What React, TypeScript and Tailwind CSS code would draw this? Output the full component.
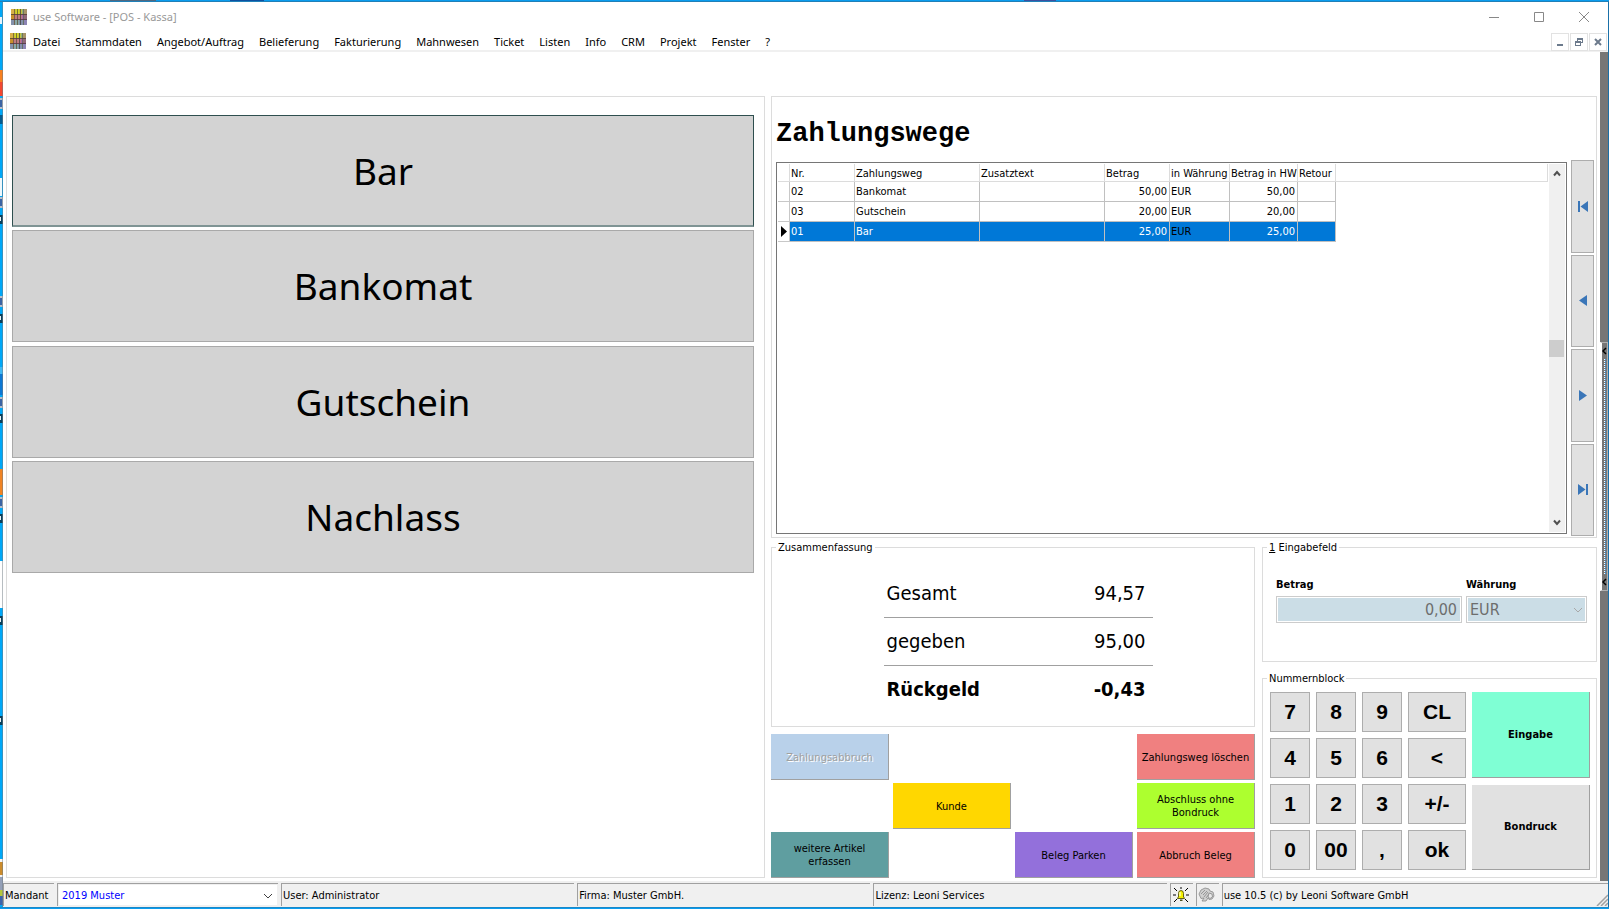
import React, { useState } from 'react';

const UI_FONT = "font-['DejaVu_Sans_Condensed','Noto_Sans',sans-serif]";
const MENU_FONT = "font-['Noto_Sans','Open_Sans',sans-serif]";

const menuItems = [
  'Datei',
  'Stammdaten',
  'Angebot/Auftrag',
  'Belieferung',
  'Fakturierung',
  'Mahnwesen',
  'Ticket',
  'Listen',
  'Info',
  'CRM',
  'Projekt',
  'Fenster',
  '?',
];

const paymentTypes = ['Bar', 'Bankomat', 'Gutschein', 'Nachlass'];

const columns = [
  { label: 'Nr.', width: 'w-[65px]' },
  { label: 'Zahlungsweg', width: 'w-[125px]' },
  { label: 'Zusatztext', width: 'w-[125px]' },
  { label: 'Betrag', width: 'w-[65px]' },
  { label: 'in Währung', width: 'w-[60px]' },
  { label: 'Betrag in HW', width: 'w-[68px]' },
  { label: 'Retour', width: 'w-[38px]' },
];

const payments = [
  { nr: '02', name: 'Bankomat', amount: '50,00', currency: 'EUR' },
  { nr: '03', name: 'Gutschein', amount: '20,00', currency: 'EUR' },
  { nr: '01', name: 'Bar', amount: '25,00', currency: 'EUR' },
];

const keys = [
  '7', '8', '9', 'CL',
  '4', '5', '6', '<',
  '1', '2', '3', '+/-',
  '0', '00', ',', 'ok',
];

const AppIcon = () => (
  <svg width="16" height="16" viewBox="0 0 16 16" className="shrink-0" shapeRendering="crispEdges">
    <rect width="16" height="5" fill="#c4c43c" />
    <rect y="5" width="16" height="6" fill="#c07a80" />
    <rect y="11" width="16" height="5" fill="#8492ac" />
    <rect width="3" height="5" fill="#d8b048" />
    <rect y="5" width="3" height="6" fill="#c8902c" />
    <rect x="5" width="3" height="5" fill="#d4d420" />
    <rect x="11" width="2" height="5" fill="#98b078" />
    <rect x="13" width="3" height="5" fill="#a89468" />
    <rect x="11" y="5" width="2" height="6" fill="#a868a8" />
    <rect x="13" y="5" width="3" height="6" fill="#906878" />
    <rect x="4" y="11" width="4" height="5" fill="#88a8a8" />
    <rect x="13" y="11" width="3" height="5" fill="#8c84b4" />
    <g fillOpacity="0.75">
      <rect x="3" width="1" height="16" fill="#6c5434" />
      <rect x="6" width="1" height="16" fill="#5c5038" />
      <rect x="9" width="1" height="16" fill="#443c3c" />
      <rect x="12" width="1" height="16" fill="#5c6450" />
      <rect y="5" width="16" height="1" fill="#4c3c30" />
      <rect y="10" width="16" height="1" fill="#4c3440" />
    </g>
  </svg>
);

const Chevron = ({ className, up }: { className?: string; up?: boolean }) => (
  <svg width="10" height="6" viewBox="0 0 10 6" className={className}>
    <path
      d={up ? 'M1 5 5 1l4 4' : 'M1 1l4 4 4-4'}
      fill="none"
      stroke="currentColor"
    />
  </svg>
);

const navIcons = [
  'M0 0h2v11H0zM10 0v11L2.500 5.500z',
  'M9 0v11L1 5.500z',
  'M1 0v11l8-5.500z',
  'M8 0h2v11H8zM0 0v11l7.500-5.500z',
];
const navLabels = ['Erster', 'Zurück', 'Weiter', 'Letzter'];

// Sliver of desktop icons left of the window frame
const DesktopEdge = () => (
  <svg
    viewBox="0 0 3 907"
    preserveAspectRatio="none"
    className="h-full w-[3px]"
    shapeRendering="crispEdges"
  >
    <rect width="3" height="907" fill="#00a8f8" />
    <rect y="15" width="2" height="7" fill="#e8f4fc" />
    <rect y="68" width="3" height="12" fill="#f88020" />
    <rect y="80" width="3" height="14" fill="#f44830" />
    <rect y="113" width="3" height="9" fill="#045c90" />
    <rect y="176" width="2" height="18" fill="#f0f8fc" />
    {[96, 195, 295, 396, 496].map((y) => (
      <g key={y}>
        <rect y={y} width="3" height="11" fill="#b8c0cc" />
        <rect y={y + 2} width="2" height="7" fill="#3c64a4" />
      </g>
    ))}
    {[213, 313, 413, 513, 615, 716].map((y) => (
      <g key={y}>
        <rect y={y} width="3" height="9" fill="#08405c" />
        <rect y={y + 2} width="1" height="4" fill="#e8f0f4" />
      </g>
    ))}
    <rect y="366" width="3" height="7" fill="#40b8f4" />
    <rect y="373" width="3" height="21" fill="#0c78d4" />
    <rect y="468" width="3" height="26" fill="#f08424" />
    <rect y="560" width="3" height="47" fill="#ffffff" />
    <rect y="859" width="3" height="3" fill="#f4f4f4" />
    <rect y="862" width="3" height="13" fill="#cc8c2c" />
    <rect y="875" width="3" height="2" fill="#f4f4f4" />
    <rect y="877" width="3" height="13" fill="#94a0b8" />
    <rect y="890" width="3" height="6" fill="#b4c83c" />
    <rect y="896" width="3" height="9" fill="#3c64ac" />
    <rect x="2" width="1" height="907" fill="#707c84" fillOpacity="0.5" />
  </svg>
);

const TitleBar = () => (
  <header className={MENU_FONT}>
    <div className="flex h-[31px] items-center pr-px pb-[2px] pl-2">
      <AppIcon />
      <h1 className="ml-[6px] flex-1 text-[11px] leading-4 text-[#999999]">
        use Software - [POS - Kassa]
      </h1>
      <div className="flex text-[#888888]">
        <button type="button" aria-label="Minimieren" className="flex h-[28px] w-[45px] items-center justify-center">
          <svg width="10" height="10" viewBox="0 0 10 10">
            <path d="M0 5.500h10" stroke="currentColor" />
          </svg>
        </button>
        <button type="button" aria-label="Maximieren" className="flex h-[28px] w-[45px] items-center justify-center">
          <svg width="10" height="10" viewBox="0 0 10 10">
            <path d="M.5.5h9v9h-9z" fill="none" stroke="currentColor" />
          </svg>
        </button>
        <button type="button" aria-label="Schließen" className="flex h-[28px] w-[46px] items-center justify-center">
          <svg width="10" height="10" viewBox="0 0 10 10">
            <path d="M0 0l10 10M10 0 0 10" stroke="currentColor" />
          </svg>
        </button>
      </div>
    </div>
    <div className="flex h-[19px] items-start border-b-2 border-[#f0f0f0] pl-[7px]">
      <AppIcon />
      <nav className="ml-[7px] flex flex-1 gap-[15px] text-[11px] leading-[17px] text-black">
        {menuItems.map((item) => (
          <button type="button" key={item}>
            {item}
          </button>
        ))}
      </nav>
      <div className="flex gap-px pr-px text-[#6c7a8c]">
        <button type="button" aria-label="Fenster minimieren" className="flex h-[18px] w-[18px] items-center justify-center border border-[#e2e2e2] bg-white">
          <svg width="8" height="8" viewBox="0 0 8 8">
            <path d="M1 6h6v2H1z" fill="currentColor" />
          </svg>
        </button>
        <button type="button" aria-label="Fenster wiederherstellen" className="flex h-[18px] w-[18px] items-center justify-center border border-[#e2e2e2] bg-white">
          <svg width="8" height="8" viewBox="0 0 8 8" shapeRendering="crispEdges">
            <path d="M2 0h6v5H6V4h1V2H3v1H2zM0 3h6v5H0zM1 5v2h4V5z" fill="currentColor" fillRule="evenodd" />
          </svg>
        </button>
        <button type="button" aria-label="Fenster schließen" className="flex h-[18px] w-[18px] items-center justify-center border border-[#e2e2e2] bg-white">
          <svg width="8" height="8" viewBox="0 0 8 8">
            <path d="M1 1l6 6M7 1 1 7" stroke="currentColor" strokeWidth="2" />
          </svg>
        </button>
      </div>
    </div>
  </header>
);

const PaymentTable = () => (
  <div className="flex flex-1 border border-[#767676] p-px">
    <div className="min-w-0 flex-1">
      <table className="w-full table-fixed border-separate border-spacing-0 text-[11px] leading-[13px]">
        <thead>
          <tr className="h-[18px]">
            <th className="w-[12px] border-r border-b border-[#dcdcdc]" />
            {columns.map((col) => (
              <th
                key={col.label}
                className={`${col.width} border-r border-b border-[#dcdcdc] p-0 pt-px pl-px text-left font-normal whitespace-nowrap`}
              >
                {col.label}
              </th>
            ))}
            <th className="border-r border-b border-[#dcdcdc]" />
          </tr>
        </thead>
        <tbody>
          {payments.map((row, i) => {
            const active = i === 2;
            const cell = `h-[20px] border-r border-b border-[#c0c0c0] p-0 pr-[2px] pl-px ${
              active ? 'bg-[#0078d7]' : 'bg-white'
            }`;
            const text = active ? 'text-white' : 'text-black';
            return (
              <tr key={row.nr}>
                <td className="border-r border-b border-[#c8c8c8] p-0">
                  {active && (
                    <svg width="6" height="11" viewBox="0 0 6 11" className="ml-[3px]">
                      <path d="M0 0v11l6-5.500z" fill="#000" />
                    </svg>
                  )}
                </td>
                <td className={`${cell} ${text}`}>{row.nr}</td>
                <td className={`${cell} ${text}`}>{row.name}</td>
                <td className={cell} />
                <td className={`${cell} ${text} text-right`}>{row.amount}</td>
                <td className={`${cell} text-black`}>{row.currency}</td>
                <td className={`${cell} ${text} text-right`}>{row.amount}</td>
                <td className={cell} />
                <td />
              </tr>
            );
          })}
        </tbody>
      </table>
    </div>
    {/* Scrollbar */}
    <div className="ml-px flex w-4 flex-col items-center bg-[#f0f0f0] py-[6px] text-[#505050]">
      <svg width="8" height="7" viewBox="0 0 8 7">
        <path d="M1 5.500 4 2l3 3.500" fill="none" stroke="currentColor" strokeWidth="2" />
      </svg>
      <div className="flex w-full flex-1 items-center">
        <div className="h-[17px] w-[15px] bg-[#cdcdcd]" />
      </div>
      <svg width="8" height="7" viewBox="0 0 8 7">
        <path d="M1 1.500 4 5l3-3.500" fill="none" stroke="currentColor" strokeWidth="2" />
      </svg>
    </div>
  </div>
);

const Summary = () => (
  <fieldset className="h-[187px] min-w-0 border border-[#dcdcdc]">
    <legend className="ml-1 px-[2px] pt-px text-[11px] leading-[13px]">Zusammenfassung</legend>
    <div className="flex justify-center pt-[15px] pl-[10px]">
      <table className="w-[269px] border-collapse text-[20px] leading-6 text-black">
        <tbody>
          <tr className="h-12 border-b border-[#a0a0a0]">
            <td className="pl-[3px]">Gesamt</td>
            <td className="pr-[7px] text-right">94,57</td>
          </tr>
          <tr className="h-12 border-b border-[#a0a0a0]">
            <td className="pl-[3px]">gegeben</td>
            <td className="pr-[7px] text-right">95,00</td>
          </tr>
          <tr className="h-12 font-bold">
            <td className="pl-[3px]">Rückgeld</td>
            <td className="pr-[7px] text-right">-0,43</td>
          </tr>
        </tbody>
      </table>
    </div>
  </fieldset>
);

const ActionButton = ({
  className,
  disabled,
  children,
}: {
  className: string;
  disabled?: boolean;
  children: React.ReactNode;
}) => (
  <button
    type="button"
    disabled={disabled}
    className={`border-r border-b border-[#a0a0a0] pt-px text-[11px] leading-[13px] ${className}`}
  >
    {children}
  </button>
);

const Actions = () => (
  <div className="grid h-[144px] grid-cols-4 grid-rows-3 gap-x-1 gap-y-[3px] text-black">
    <ActionButton
      disabled
      className="col-start-1 bg-[#b9d1ea] text-[#a0a0a0] [text-shadow:1px_1px_0_#fff]"
    >
      Zahlungsabbruch
    </ActionButton>
    <ActionButton className="col-start-4 bg-[#f08080]">Zahlungsweg löschen</ActionButton>
    <ActionButton className="col-start-2 bg-[#ffd700]">Kunde</ActionButton>
    <ActionButton className="col-start-4 bg-[#adff2f] px-4">Abschluss ohne Bondruck</ActionButton>
    <ActionButton className="col-start-1 bg-[#5f9ea0] px-4">weitere Artikel erfassen</ActionButton>
    <ActionButton className="col-start-3 bg-[#9370db]">Beleg Parken</ActionButton>
    <ActionButton className="col-start-4 bg-[#f08080]">Abbruch Beleg</ActionButton>
  </div>
);

const EntryFields = () => (
  <fieldset className="h-[122px] min-w-0 border border-[#dcdcdc]">
    <legend className="ml-1 px-[2px] pt-px text-[11px] leading-[13px]">
      <span className="underline">1</span> Eingabefeld
    </legend>
    <div className="flex gap-1 pt-6 pr-[9px] pl-[13px]">
      <div className="min-w-0 flex-[186]">
        <label htmlFor="betrag" className="block text-[11px] leading-[13px] font-bold">
          Betrag
        </label>
        <input
          id="betrag"
          type="text"
          defaultValue="0,00"
          disabled
          className="mt-[5px] h-[27px] w-full border border-[#cccccc] bg-[#cbdde6] px-1 text-right text-[16px] leading-5 text-[#6d6d6d] shadow-[inset_0_0_0_1px_#fff]"
        />
      </div>
      <div className="min-w-0 flex-[121]">
        <label htmlFor="waehrung" className="block text-[11px] leading-[13px] font-bold">
          Währung
        </label>
        <div className="relative mt-[5px]">
          <select
            id="waehrung"
            disabled
            className="h-[27px] w-full appearance-none border border-[#cccccc] bg-[#cbdde6] px-[3px] text-[16px] leading-5 text-[#6d6d6d] shadow-[inset_0_0_0_1px_#fff] disabled:opacity-100"
          >
            <option>EUR</option>
          </select>
          <Chevron className="pointer-events-none absolute top-[11px] right-1 text-[#a8a8a8]" />
        </div>
      </div>
    </div>
  </fieldset>
);

const NumberBlock = () => (
  <fieldset className="h-[207px] min-w-0 border border-[#dcdcdc]">
    <legend className="ml-1 px-[2px] pt-px text-[11px] leading-[13px]">Nummernblock</legend>
    <div className="flex h-[185px] gap-[6px] pt-[7px] pr-[6px] pl-[7px]">
      <div className="grid flex-[196] grid-cols-[40fr_40fr_40fr_58fr] grid-rows-4 gap-[6px] font-['Liberation_Sans',sans-serif] text-[21px] leading-6 font-bold">
        {keys.map((key) => (
          <button type="button" key={key} className="min-w-0 border border-[#adadad] bg-[#e1e1e1]">
            {key}
          </button>
        ))}
      </div>
      <div className="grid flex-[118] grid-rows-2 gap-[7px] text-[11px] leading-[13px] font-bold">
        <button type="button" className="border-r border-b border-[#a0a0a0] bg-[#7fffd4]">
          Eingabe
        </button>
        <button type="button" className="border-r border-b border-[#a0a0a0] bg-[#e1e1e1]">
          Bondruck
        </button>
      </div>
    </div>
  </fieldset>
);

const StatusBar = () => {
  const [client, setClient] = useState('2019 Muster');
  const panel = 'flex items-center border-t border-l border-[#a0a0a0] pl-px';

  return (
    <footer className="flex h-[26px] gap-[3px] bg-[#f0f0f0] pt-[2px] pb-px text-[11px] leading-[13px] text-black">
      <label htmlFor="mandant" className={`${panel} w-[51px]`}>
        Mandant
      </label>
      <div className="relative w-[221px] border-t border-l border-[#a0a0a0] p-px">
        <select
          id="mandant"
          value={client}
          onChange={(e) => setClient(e.target.value)}
          className="h-full w-full appearance-none bg-white pl-[3px] text-[#0000ff] outline-none"
        >
          <option>2019 Muster</option>
        </select>
        <Chevron className="pointer-events-none absolute top-[9px] right-[5px] text-[#404040]" />
      </div>
      <div className={`${panel} flex-[294]`}>User: Administrator</div>
      <div className={`${panel} flex-[294]`}>Firma: Muster GmbH.</div>
      <div className={`${panel} flex-[294]`}>Lizenz: Leoni Services</div>
      <div className="flex w-[23px] items-center justify-center border-t border-l border-[#a0a0a0] pr-[2px]">
        <svg width="16" height="16" viewBox="0 0 16 16">
          <path d="M1 1l3 3M15 1l-3 3M0 8h3M13 8h3M1 15l3-3M15 15l-3-3M8 0v2" stroke="#000" />
          <path d="M4.500 11.500V11l1-1V6.500a2.500 3 0 0 1 5 0V10l1 1v.5z" fill="#f4f000" stroke="#404000" strokeWidth=".8" />
          <path d="M7 12.500h2.500V14H7z" fill="#505020" />
          <path d="M7 5v4" stroke="#fff" />
        </svg>
      </div>
      <div className="flex w-[23px] items-center justify-center border-t border-l border-[#a0a0a0] pr-[2px]">
        <svg width="17" height="16" viewBox="0 0 17 16" fill="#d0d0d0" stroke="#888" strokeWidth=".8">
          <path d="M1 7l2-4 4-2 4 1 1 2 3 1 1 4-2 3-3 .5-1-1.500-2 3H4l2-3-3 .5z" />
          <path d="M3 7l4-4M5 8l4-4M6 10l4-5M8 11l3-4" fill="none" />
          <path d="M11 6l3 1 .5 3-2.500 1.500L10 10z" fill="#e8e8e8" />
        </svg>
      </div>
      <div className={`${panel} relative flex-[388] pl-[2px]`}>
        use 10.5 (c) by Leoni Software GmbH
        <svg width="12" height="12" viewBox="0 0 12 12" className="absolute right-0 bottom-0">
          <path d="M1 12 12 1M5 12l7-7M9 12l3-3" stroke="#a0a0a0" strokeWidth="1.500" />
        </svg>
      </div>
    </footer>
  );
};

const SideHandle = () => (
  <div className="flex w-2 flex-col bg-[#767676] pt-[290px]">
    <button
      type="button"
      aria-label="Seitenleiste öffnen"
      className="flex h-[249px] w-full flex-col items-center border border-l-2 border-[#b0b0b0] border-l-white py-1"
    >
      <svg width="5" height="8" viewBox="0 0 5 8">
        <path d="M4 1 1 4l3 3" fill="none" stroke="#000" strokeWidth="1.500" />
      </svg>
      <span className="my-1 flex flex-1">
        <span className="border-l border-dotted border-white" />
        <span className="border-l border-dotted border-[#3c9ce8]" />
      </span>
      <svg width="5" height="8" viewBox="0 0 5 8">
        <path d="M4 1 1 4l3 3" fill="none" stroke="#000" strokeWidth="1.500" />
      </svg>
    </button>
  </div>
);

const App = () => {
  return (
    <div className={`flex min-h-screen flex-col bg-[#0a9cee] text-black ${UI_FONT}`}>
      {/* Desktop above the window */}
      <div className="flex h-[2px] border-b border-[#2080b8]">
        <div className="ml-[110px] w-[46px] bg-[#506880]" />
        <div className="ml-[74px] w-[34px] bg-[#0c50a0]" />
        <div className="ml-[760px] w-[32px] bg-[#3c50a0]" />
      </div>

      <div className="flex flex-1">
        <div className="relative w-[3px]">
          <div className="absolute inset-0">
            <DesktopEdge />
          </div>
        </div>

        <div className="flex min-w-0 flex-1 flex-col border-r border-[#1a70a8] bg-white">
          <TitleBar />

          <div className="flex flex-1">
            <main className="grid min-w-0 flex-1 grid-cols-[759fr_826fr] gap-[6px] pt-[44px] pr-[3px] pb-[3px] pl-[3px]">
              {/* Payment types */}
              <section className="border border-[#dcdcdc] pt-[18px] pr-[10px] pl-[5px]">
                <div className="flex h-[458px] flex-col justify-between">
                  {paymentTypes.map((type, i) => (
                    <button
                      type="button"
                      key={type}
                      className={`h-[112px] border bg-[#d3d3d3] text-[37px] leading-[48px] ${MENU_FONT} ${
                        i === 0
                          ? 'border-[#2f4f4f] border-b-2 border-b-[#7f9494]'
                          : 'border-[#a9a9a9]'
                      }`}
                    >
                      {type}
                    </button>
                  ))}
                </div>
              </section>

              <div className="flex min-w-0 flex-col">
                {/* Payments */}
                <section className="flex flex-1 gap-1 border border-[#dcdcdc] pr-[2px] pb-px pl-1">
                  <div className="flex min-w-0 flex-1 flex-col pb-[2px]">
                    <h2 className="pt-[21px] pb-3 font-['Liberation_Mono',monospace] text-[27px] leading-8 font-bold">
                      Zahlungswege
                    </h2>
                    <PaymentTable />
                  </div>
                  <div className="flex w-[23px] flex-col gap-[2px] pt-[63px]">
                    {navIcons.map((path, i) => (
                      <button
                        type="button"
                        key={path}
                        aria-label={navLabels[i]}
                        className="flex flex-1 items-center justify-center border border-[#adadad] bg-[#e1e1e1]"
                      >
                        <svg width="10" height="11" viewBox="0 0 10 11">
                          <path d={path} fill="#3a76b8" />
                        </svg>
                      </button>
                    ))}
                  </div>
                </section>

                <div className="mt-[2px] grid grid-cols-[484fr_335fr] gap-[7px]">
                  <div className="flex min-w-0 flex-col gap-[7px]">
                    <Summary />
                    <Actions />
                  </div>
                  <div className="flex min-w-0 flex-col gap-[9px]">
                    <EntryFields />
                    <NumberBlock />
                  </div>
                </div>
              </div>
            </main>
            <SideHandle />
          </div>

          <StatusBar />
        </div>
      </div>

      {/* Desktop below the window */}
      <div className="h-[2px] border-t border-[#1a88c8]" />
    </div>
  );
};

export default App;
